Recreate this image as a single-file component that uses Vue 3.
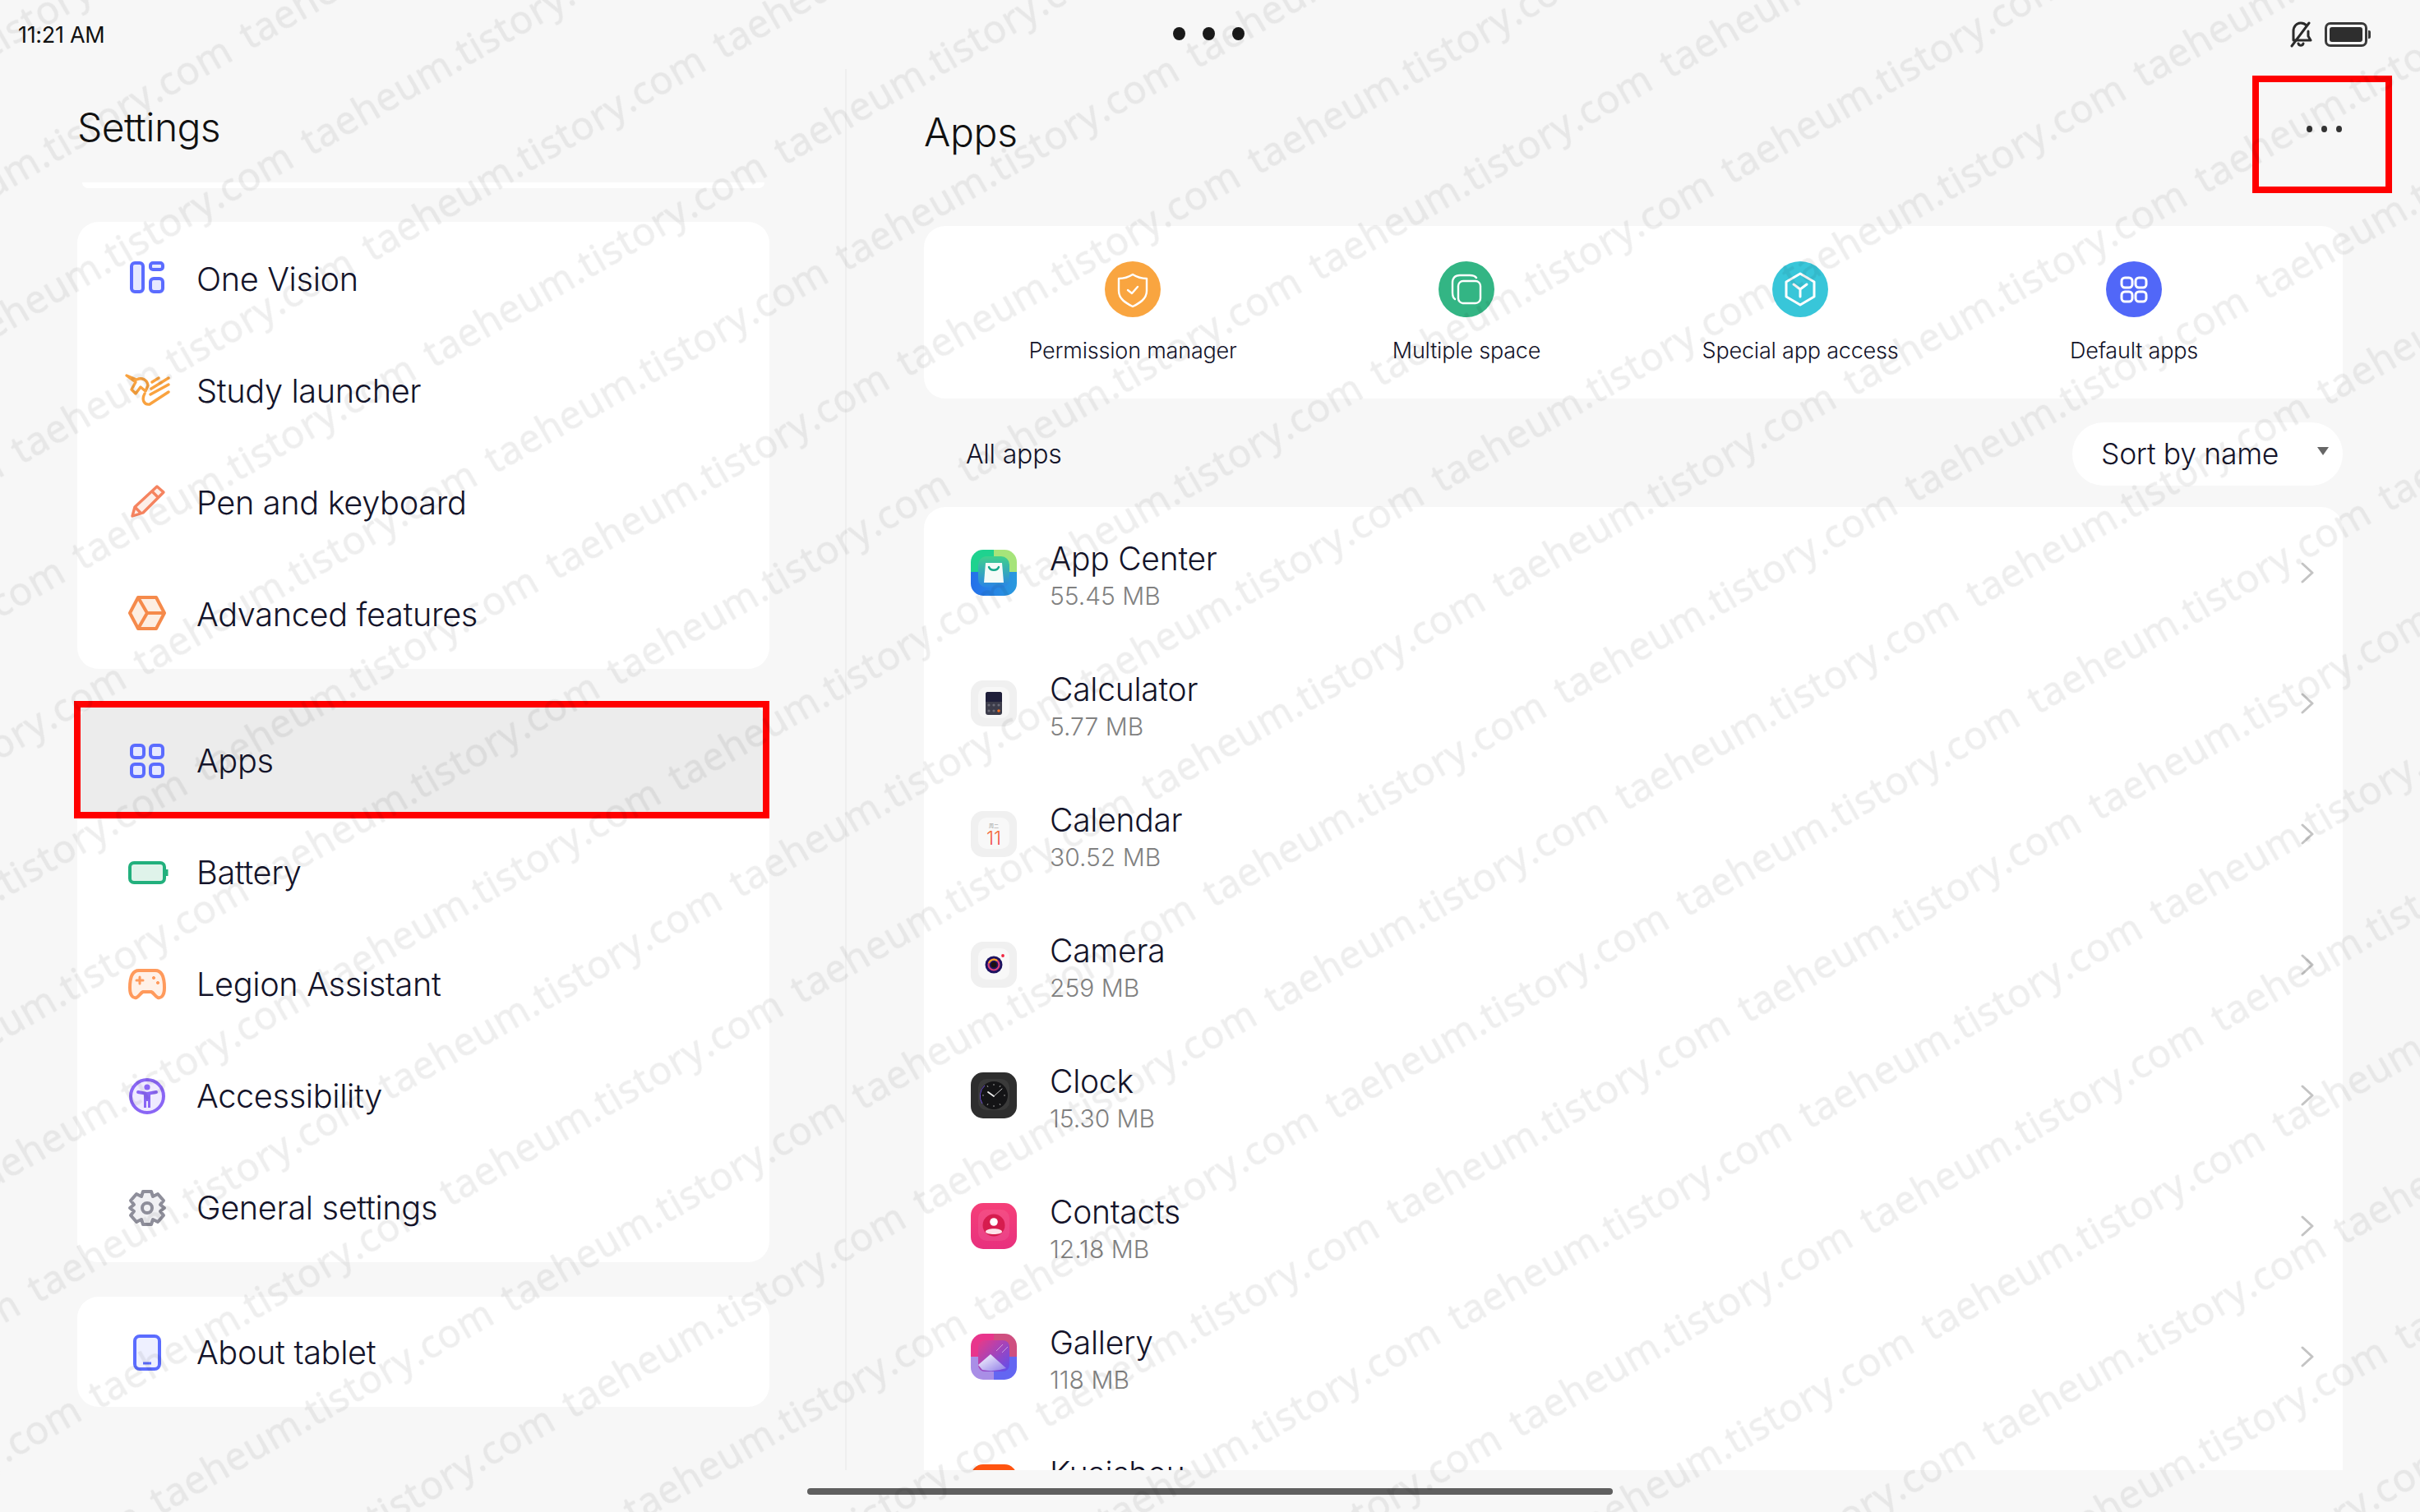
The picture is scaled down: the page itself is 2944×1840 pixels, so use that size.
<template>
  <div class="screen">
    <header class="status">
      <span class="time">11:21 AM</span>
      <div class="status-dots"><i></i><i></i><i></i></div>
      <div class="status-icons">
        <svg width="30" height="32" viewBox="0 0 30 32" fill="none" stroke="#2b2b2b" stroke-width="3" stroke-linecap="round" stroke-linejoin="round">
          <path d="M6 23V12C6 6 10 2 15 2c3 0 5 1 7 3M24 12v6l3 5H6" />
          <path d="M12 27c1 3 5 3 6 0" />
          <path d="M25 2 4 30" />
        </svg>
        <div class="battery"><span></span></div>
      </div>
    </header>

    <main class="main">
      <aside class="side">
        <h1 class="side-title">Settings</h1>
        <div class="sliver"></div>

        <section class="card card-first">
          <div class="row">
            <svg class="ic" viewBox="0 0 56 56" fill="#e6e9ff" stroke="#5b6cff" stroke-width="4">
              <rect x="9" y="10" width="14" height="35" rx="4" />
              <rect x="32" y="10" width="15" height="8" rx="3" />
              <rect x="32" y="29" width="15" height="16" rx="4" />
            </svg>
            <span>One Vision</span>
          </div>
          <div class="row">
            <svg class="ic" viewBox="0 0 56 56" fill="none" stroke="#f9a23f" stroke-width="3.4" stroke-linejoin="round" stroke-linecap="round">
              <path d="M3 11 15 16C22 13 28 16 29 23L26 30 20 25 14 33 9 28 14 19Z" />
              <path d="M34 19 42 14M33 27 54 14M32 34 54 22" />
              <path d="M25 33C21 40 24 47 31 46L54 31" />
            </svg>
            <span>Study launcher</span>
          </div>
          <div class="row">
            <svg class="ic" viewBox="0 0 56 56" fill="#fdeee8" stroke="#f5835f" stroke-width="3.4" stroke-linejoin="round">
              <path d="M40 10 48 17 23 42 10 46 13 35Z" />
              <path d="M34 16 42 24M13 35 21 43" fill="none" />
            </svg>
            <span>Pen and keyboard</span>
          </div>
          <div class="row">
            <svg class="ic" viewBox="0 0 56 56" fill="#fdeee2" stroke="#f58a4b" stroke-width="4" stroke-linejoin="round">
              <path d="M17 9H39L49 28 39 47H17L7 28Z" />
              <path d="M17 9 28 28 49 28M28 28 17 47" fill="none" />
            </svg>
            <span>Advanced features</span>
          </div>
        </section>

        <section class="card card-mid">
          <div class="row row-active">
            <svg class="ic" viewBox="0 0 56 56" fill="#e6e9ff" stroke="#5b6cff" stroke-width="4">
              <rect x="9" y="9" width="15" height="15" rx="4" />
              <rect x="32" y="9" width="15" height="15" rx="4" />
              <rect x="9" y="32" width="15" height="15" rx="4" />
              <rect x="32" y="32" width="15" height="15" rx="4" />
            </svg>
            <span>Apps</span>
          </div>
          <div class="row">
            <svg class="ic" viewBox="0 0 56 56" fill="#dff3ea" stroke="#22b07d" stroke-width="4">
              <rect x="7" y="16" width="42" height="24" rx="5" />
              <path d="M52 24v8" stroke-width="3" />
            </svg>
            <span>Battery</span>
          </div>
          <div class="row">
            <svg class="ic" viewBox="0 0 56 56" fill="#fff1e8" stroke="#ff9a5c" stroke-width="4" stroke-linejoin="round">
              <path d="M18 11H38C46 11 49 20 49 32 49 42 45 45 41 44 38 43 36 38 33 37H23C20 38 18 43 15 44 11 45 7 42 7 32 7 20 10 11 18 11Z" />
              <path d="M19 19v8M15 23h8" fill="none" stroke-width="3" stroke-linecap="round" />
              <circle cx="36" cy="20" r="1.6" fill="#ff9a5c" stroke-width="1" />
              <circle cx="41" cy="26" r="1.6" fill="#ff9a5c" stroke-width="1" />
            </svg>
            <span>Legion Assistant</span>
          </div>
          <div class="row">
            <svg class="ic" viewBox="0 0 56 56" fill="#efeaff" stroke="#8a66f5" stroke-width="4">
              <circle cx="28" cy="28" r="20" />
              <circle cx="28" cy="17" r="3.6" fill="#8a66f5" stroke="none" />
              <path d="M17 23 28 25 39 23" fill="none" stroke-linecap="round" />
              <path d="M24 26H32V42H29V34H27V42H24Z" fill="#8a66f5" stroke="none" />
            </svg>
            <span>Accessibility</span>
          </div>
          <div class="row">
            <svg class="ic" viewBox="0 0 56 56" fill="#f1f1f4" stroke="#8e8e9a" stroke-width="4" stroke-linejoin="round">
              <path d="M23 8H33L35 14 41 11 48 19 44 24 49 28 44 32 48 37 41 45 35 42 33 48H23L21 42 15 45 8 37 12 32 7 28 12 24 8 19 15 11 21 14Z" />
              <circle cx="28" cy="28" r="6" fill="none" />
            </svg>
            <span>General settings</span>
          </div>
        </section>

        <section class="card card-last">
          <div class="row">
            <svg class="ic" viewBox="0 0 56 56" fill="#eef0ff" stroke="#5b6cff" stroke-width="4">
              <rect x="13" y="8" width="30" height="40" rx="6" />
              <path d="M23 41h10" stroke-width="3" />
            </svg>
            <span>About tablet</span>
          </div>
        </section>
      </aside>

      <section class="content">
        <div class="content-head">
          <h2 class="content-title">Apps</h2>
          <div class="more"><i></i><i></i><i></i></div>
        </div>

        <div class="shortcuts">
          <div class="shortcut">
            <svg class="sc-ic" viewBox="0 0 68 68" fill="none" stroke="#fff" stroke-width="2.4" stroke-linejoin="round" stroke-linecap="round">
              <circle cx="34" cy="34" r="34" fill="#f9a540" stroke="none" />
              <path d="M34 16Q42 21 51 21V36C51 46 42 51 34 55 26 51 17 46 17 36V21Q26 21 34 16Z" />
              <path d="M28 35 33 39 40 31" />
            </svg>
            <span>Permission manager</span>
          </div>
          <div class="shortcut">
            <svg class="sc-ic" viewBox="0 0 68 68" fill="none" stroke="#fff" stroke-width="2.4" stroke-linecap="round">
              <circle cx="34" cy="34" r="34" fill="#33b584" stroke="none" />
              <rect x="24" y="24" width="27" height="27" rx="6" />
              <path d="M20 46Q17 44 17 38V26Q17 17 26 17H38Q44 17 46 20" />
            </svg>
            <span>Multiple space</span>
          </div>
          <div class="shortcut">
            <svg class="sc-ic" viewBox="0 0 68 68" fill="none" stroke="#fff" stroke-width="3" stroke-linejoin="round" stroke-linecap="round">
              <circle cx="34" cy="34" r="34" fill="#38c6d9" stroke="none" />
              <path d="M34 15 51 25V43L34 53 17 43V25Z" />
              <path d="M26 28 34 34 42 28M34 34V43" />
            </svg>
            <span>Special app access</span>
          </div>
          <div class="shortcut">
            <svg class="sc-ic" viewBox="0 0 68 68" fill="none" stroke="#fff" stroke-width="3">
              <circle cx="34" cy="34" r="34" fill="#5167f8" stroke="none" />
              <rect x="19" y="20" width="13" height="12" rx="4" />
              <rect x="36" y="20" width="13" height="12" rx="4" />
              <rect x="19" y="37" width="13" height="12" rx="4" />
              <rect x="36" y="37" width="13" height="12" rx="4" />
            </svg>
            <span>Default apps</span>
          </div>
        </div>

        <div class="list-head">
          <span class="all-apps">All apps</span>
          <div class="sort">
            <span>Sort by name</span>
            <i class="sort-arrow"></i>
          </div>
        </div>

        <div class="app-list">
          <div v-for="app in apps" :key="app.name" class="app-row">
            <svg class="app-ic" viewBox="0 0 56 56">
              <template v-if="app.icon === 'center'">
                <defs>
                  <linearGradient id="acBlue" x1="0" y1="0" x2="1" y2="0"><stop offset="0" stop-color="#2470ea" /><stop offset="1" stop-color="#2a9ade" /></linearGradient>
                  <linearGradient id="acIn" x1="0" y1="0" x2="0" y2="1"><stop offset="0" stop-color="#3fd08c" /><stop offset="1" stop-color="#2a84e6" /></linearGradient>
                </defs>
                <rect width="28" height="28" fill="#1fd28f" />
                <rect x="28" width="28" height="28" fill="#a6e47a" />
                <rect y="27" width="56" height="29" fill="url(#acBlue)" />
                <rect x="9" y="8" width="38" height="38" rx="10" fill="url(#acIn)" />
                <path d="M18 16H38L40 40H16Z" fill="#f4fbf8" />
                <path d="M22 21C24 26 32 26 34 21" fill="none" stroke="#14a88a" stroke-width="2.4" stroke-linecap="round" />
              </template>
              <template v-else-if="app.icon === 'calc'">
                <rect width="56" height="56" fill="#f0f0f0" />
                <rect x="9" y="8" width="38" height="38" rx="10" fill="#f7f7f7" />
                <rect x="18" y="14" width="20" height="28" rx="3" fill="#3c3c4a" />
                <path d="M18 26V17a3 3 0 0 1 3-3h14a3 3 0 0 1 3 3v9Z" fill="#1f1f3a" />
                <g fill="#6a6a76">
                  <circle cx="22" cy="30" r="1.6" /><circle cx="28" cy="30" r="1.6" /><circle cx="34" cy="30" r="1.6" />
                  <circle cx="22" cy="37" r="1.6" /><circle cx="28" cy="37" r="1.6" />
                </g>
                <circle cx="34" cy="37" r="1.8" fill="#f36d21" />
              </template>
              <template v-else-if="app.icon === 'calendar'">
                <defs>
                  <linearGradient id="calRed" x1="0" y1="0" x2="0" y2="1"><stop offset="0" stop-color="#f57d30" /><stop offset="1" stop-color="#ee2a4a" /></linearGradient>
                </defs>
                <rect width="56" height="56" fill="#f0f0f0" />
                <rect x="9" y="8" width="38" height="38" rx="10" fill="#f8f8f8" />
                <text x="28" y="20" class="cal-day">周二</text>
                <text x="28" y="41" class="cal-num" fill="url(#calRed)">11</text>
              </template>
              <template v-else-if="app.icon === 'camera'">
                <rect width="56" height="56" fill="#f0f0f0" />
                <rect x="9" y="8" width="38" height="38" rx="10" fill="#f8f8f8" />
                <circle cx="28" cy="28" r="10.5" fill="#1c1260" />
                <circle cx="28" cy="28" r="6.5" fill="none" stroke="#d9417d" stroke-width="2.2" />
                <path d="M22 26a6.5 6.5 0 0 1 10-3" fill="none" stroke="#f5a623" stroke-width="2.2" />
                <circle cx="28" cy="28" r="3.6" fill="#1a1010" />
                <circle cx="39" cy="17" r="1.9" fill="#f0243f" />
              </template>
              <template v-else-if="app.icon === 'clock'">
                <rect width="56" height="56" fill="#2e2e2e" />
                <rect x="9" y="8" width="38" height="38" rx="10" fill="#3a3a3a" />
                <circle cx="28" cy="28" r="17" fill="#141416" />
                <path d="M17 16A17 17 0 0 0 14 38" fill="none" stroke="#6a4ad0" stroke-width="1" />
                <path d="M28 29 21 24" stroke="#eee" stroke-width="1.8" stroke-linecap="round" />
                <path d="M28 29 38 20" stroke="#ccc" stroke-width="1" stroke-linecap="round" />
                <path d="M28 14v2M28 40v2M14 28h2M40 28h2M20 16l1 2M36 16l-1 2M20 40l1-2M36 40l-1-2" stroke="#999" stroke-width="1" />
              </template>
              <template v-else-if="app.icon === 'contacts'">
                <defs>
                  <linearGradient id="ctBg" x1="0" y1="0" x2="0" y2="1"><stop offset="0" stop-color="#f53f78" /><stop offset="1" stop-color="#e8307e" /></linearGradient>
                </defs>
                <rect width="56" height="56" fill="url(#ctBg)" />
                <rect x="9" y="8" width="38" height="38" rx="10" fill="#fff" fill-opacity=".08" />
                <circle cx="28" cy="27" r="13.5" fill="#d61c4e" />
                <circle cx="28" cy="23" r="4.8" fill="#fff" />
                <path d="M18 35C18 30 38 30 38 35 38 39 18 39 18 35Z" fill="#fde4ea" />
              </template>
              <template v-else-if="app.icon === 'gallery'">
                <defs>
                  <linearGradient id="gaIn" x1="0" y1="0" x2="1" y2="1"><stop offset="0" stop-color="#e83a88" /><stop offset="1" stop-color="#5a4ff0" /></linearGradient>
                  <linearGradient id="gaMt" x1="0" y1="0" x2="1" y2="1"><stop offset="0" stop-color="#fff" /><stop offset="1" stop-color="#8f7de8" /></linearGradient>
                </defs>
                <rect width="28" height="28" fill="#e8358c" />
                <rect x="28" width="28" height="28" fill="#cf4f80" />
                <rect y="28" width="28" height="28" fill="#a98ee6" />
                <rect x="28" y="28" width="28" height="28" fill="#6366f2" />
                <rect x="9" y="8" width="38" height="38" rx="8" fill="url(#gaIn)" />
                <path d="M9 38 24 25 43 42 Q28 47 14 44Z" fill="url(#gaMt)" />
                <path d="M31 21 39 13M38 23 45 16" stroke="#fff" stroke-opacity=".6" stroke-width=".8" />
              </template>
              <template v-else>
                <rect width="56" height="56" fill="#ff5410" />
              </template>
            </svg>
            <div class="app-text">
              <span class="app-name">{{ app.name }}</span>
              <span class="app-size">{{ app.size }}</span>
            </div>
            <svg class="chev" width="16" height="26" viewBox="0 0 16 26" fill="none" stroke="#c4c4c4" stroke-width="3" stroke-linecap="round" stroke-linejoin="round">
              <path d="M2 2 14 13 2 24" />
            </svg>
          </div>
        </div>
      </section>
    </main>

    <footer class="home"><div class="home-bar"></div></footer>

    <svg class="watermark" width="2944" height="1840">
      <defs>
        <pattern id="wm" width="493" height="149" patternUnits="userSpaceOnUse" patternTransform="translate(1977 988) rotate(-30) translate(0 -100)">
          <text x="0" y="100" class="wm-text">taeheum.tistory.com</text>
        </pattern>
      </defs>
      <rect width="2944" height="1840" fill="url(#wm)" />
    </svg>
  </div>
</template>

<script setup>
const apps = [
  { name: 'App Center', size: '55.45 MB', icon: 'center' },
  { name: 'Calculator', size: '5.77 MB', icon: 'calc' },
  { name: 'Calendar', size: '30.52 MB', icon: 'calendar' },
  { name: 'Camera', size: '259 MB', icon: 'camera' },
  { name: 'Clock', size: '15.30 MB', icon: 'clock' },
  { name: 'Contacts', size: '12.18 MB', icon: 'contacts' },
  { name: 'Gallery', size: '118 MB', icon: 'gallery' },
  { name: 'Kuaishou', size: '', icon: 'kuaishou' }
]
</script>

<style>
body {
  background: #f7f7f7;
}
</style>

<style scoped>
.screen {
  position: relative;
  width: 2944px;
  height: 1840px;
  overflow: hidden;
  display: flex;
  flex-direction: column;
  background: #f7f7f7;
  color: #14142a;
  font-family: Inter, "Noto Sans", sans-serif;
}

.status {
  height: 84px;
  flex: none;
  position: relative;
  display: flex;
  align-items: flex-start;
  justify-content: space-between;
}

.time {
  margin: 27px 0 0 22px;
  font-size: 27px;
  line-height: 32px;
  letter-spacing: -0.3px;
  color: #111;
}

.status-dots {
  position: absolute;
  left: 1427px;
  top: 33px;
  display: flex;
  gap: 21px;
}

.status-dots i {
  width: 15px;
  height: 16px;
  border-radius: 50%;
  background: #1a1a1a;
}

.status-icons {
  margin: 26px 64px 0 0;
  display: flex;
  align-items: center;
  gap: 14px;
}

.battery {
  position: relative;
  width: 52px;
  height: 30px;
  box-sizing: border-box;
  border: 3px solid #3a3a3a;
  border-radius: 7px;
  padding: 3px;
}

.battery::after {
  content: "";
  position: absolute;
  right: -7px;
  top: 7px;
  width: 3px;
  height: 10px;
  background: #3a3a3a;
  border-radius: 0 2px 2px 0;
}

.battery span {
  display: block;
  height: 100%;
  border-radius: 3px;
  background: #2e2e2e;
}

.main {
  flex: none;
  height: 1705px;
  display: flex;
  overflow: hidden;
}

.side {
  flex: none;
  width: 1030px;
  box-sizing: border-box;
  padding: 0 92px 0 94px;
  border-right: 2px solid #efefef;
}

.side-title {
  margin: 41px 0 0;
  font-size: 48px;
  line-height: 60px;
  font-weight: 350;
  letter-spacing: -0.6px;
  color: #111;
}

.sliver {
  height: 7px;
  margin: 37px 6px 41px;
  background: #fff;
  border-radius: 0 0 14px 14px;
}

.card {
  background: #fff;
  border-radius: 26px;
}

.card-first .row span {
  margin-top: 4px;
}

.card-mid {
  margin-top: 44px;
  height: 678px;
}

.card-last {
  margin-top: 42px;
  height: 134px;
}

.row {
  position: relative;
  height: 136px;
  display: flex;
  align-items: center;
  gap: 32px;
  padding-left: 57px;
  font-size: 39.7px;
  font-weight: 350;
  letter-spacing: -0.35px;
}

.row-active {
  background: #ececec;
  border-radius: 26px 26px 0 0;
}

.row-active::after {
  content: "";
  position: absolute;
  left: -4px;
  right: 0;
  top: -5px;
  bottom: -2px;
  border: 8px solid #ff0000;
}

.ic {
  width: 56px;
  height: 56px;
  flex: none;
}

.content {
  flex: 1;
  min-width: 0;
  display: flex;
  flex-direction: column;
  padding: 0 94px;
}

.content-head {
  height: 191px;
  flex: none;
  display: flex;
  justify-content: space-between;
  align-items: flex-start;
}

.content-title {
  margin: 47px 0 0;
  font-size: 48px;
  line-height: 60px;
  font-weight: 350;
  letter-spacing: -0.3px;
  color: #111;
}

.more {
  box-sizing: border-box;
  width: 170px;
  height: 143px;
  margin: 8px -60px 0 0;
  border: 8px solid #ff0000;
  display: flex;
  justify-content: center;
  gap: 11px;
  padding-top: 53px;
  padding-left: 5px;
}

.more i {
  width: 7px;
  height: 8px;
  border-radius: 50%;
  background: #333;
}

.shortcuts {
  height: 210px;
  flex: none;
  box-sizing: border-box;
  padding: 43px 51px 0;
  display: grid;
  grid-template-columns: repeat(4, 1fr);
  background: #fff;
  border-radius: 26px;
}

.shortcut {
  display: flex;
  flex-direction: column;
  align-items: center;
  gap: 24px;
  font-size: 27px;
  font-weight: 350;
  line-height: 34px;
  letter-spacing: -0.2px;
}

.sc-ic {
  width: 68px;
  height: 68px;
}

.list-head {
  height: 132px;
  flex: none;
  display: flex;
  align-items: center;
  justify-content: space-between;
  padding: 2px 0 0 51px;
  box-sizing: border-box;
}

.all-apps {
  font-size: 32px;
  font-weight: 350;
  letter-spacing: -0.2px;
}

.sort {
  width: 329px;
  height: 77px;
  box-sizing: border-box;
  background: #fff;
  border-radius: 38px;
  display: flex;
  align-items: center;
  justify-content: space-between;
  padding: 0 17px 0 35px;
  font-size: 35.5px;
  font-weight: 350;
  letter-spacing: -0.3px;
}

.sort-arrow {
  width: 0;
  height: 0;
  border-left: 7px solid transparent;
  border-right: 7px solid transparent;
  border-top: 10px solid #666;
  margin-top: -6px;
}

.app-list {
  flex: 1;
  min-height: 0;
  overflow: hidden;
  background: #fff;
  border-radius: 26px 26px 0 0;
}

.app-row {
  height: 159px;
  display: flex;
  align-items: center;
  padding: 0 35px 0 57px;
}

.app-ic {
  width: 56px;
  height: 56px;
  flex: none;
  border-radius: 15px;
}

.cal-day {
  font-family: "Noto Sans CJK SC", sans-serif;
  font-size: 6px;
  text-anchor: middle;
  fill: #9a9a9a;
}

.cal-num {
  font-size: 23px;
  font-weight: 300;
  text-anchor: middle;
}

.app-text {
  flex: 1;
  display: flex;
  flex-direction: column;
  margin-left: 40px;
  margin-top: 6px;
}

.app-name {
  font-size: 39px;
  font-weight: 350;
  line-height: 48px;
  letter-spacing: -0.25px;
}

.app-size {
  min-height: 38px;
  margin-top: 2px;
  font-size: 30px;
  font-weight: 350;
  line-height: 38px;
  color: #818181;
}

.chev {
  flex: none;
}

.home {
  flex: 1;
  display: flex;
  justify-content: center;
  padding-top: 22px;
}

.home-bar {
  width: 980px;
  height: 8px;
  border-radius: 4px;
  background: #5f5f5f;
}

.watermark {
  position: absolute;
  left: 0;
  top: 0;
  pointer-events: none;
}

.wm-text {
  font-family: "Open Sans", sans-serif;
  font-size: 47px;
  letter-spacing: 1px;
  fill: #000;
  stroke: #000;
  stroke-width: 0.8px;
  stroke-linejoin: round;
  opacity: 0.065;
}
</style>
